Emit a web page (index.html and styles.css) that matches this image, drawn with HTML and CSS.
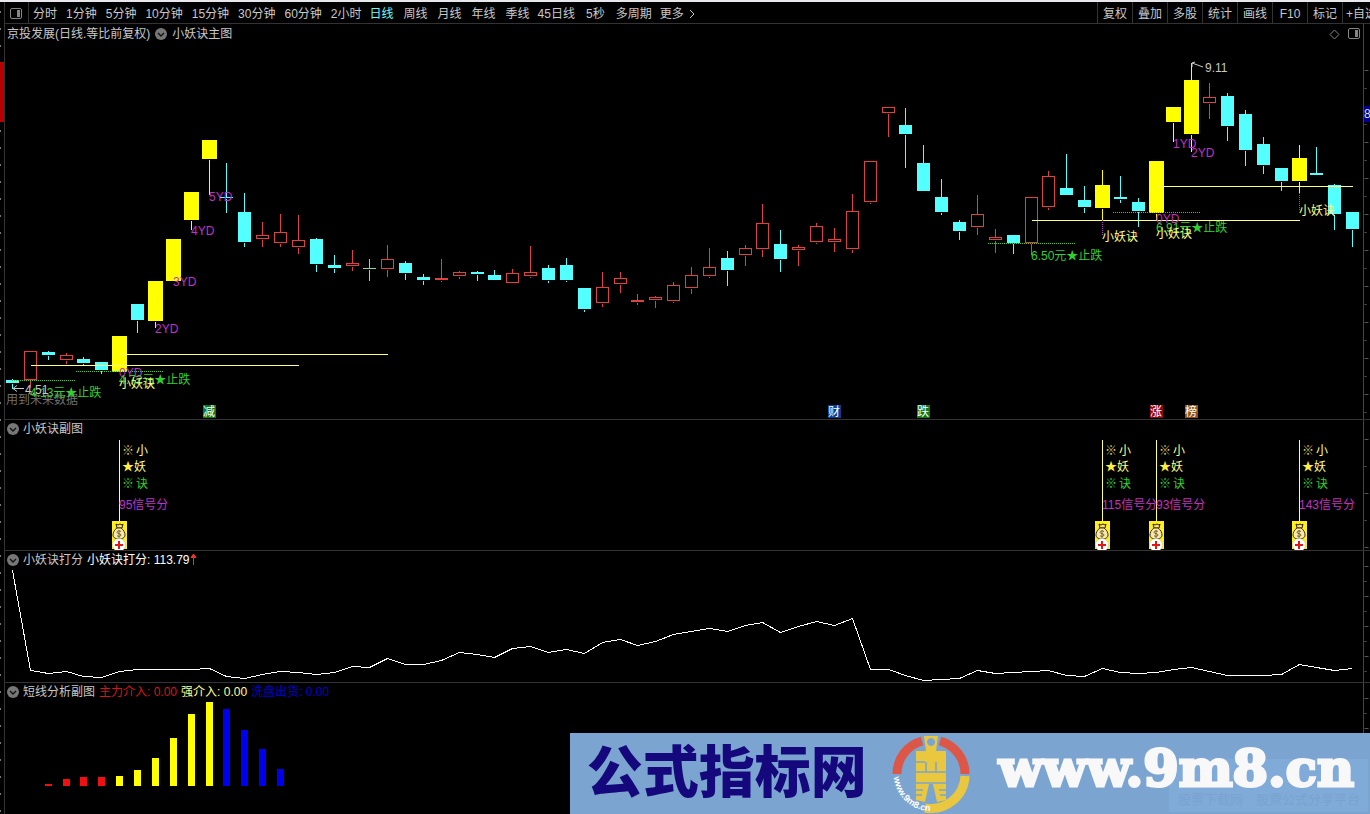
FILE: index.html
```
<!DOCTYPE html>
<html lang="zh-CN">
<head>
    <meta charset="utf-8">
    <title>京投发展 - 日线</title>
    <link rel="stylesheet" href="styles.css">
</head>
<body>
    <svg class="defs" aria-hidden="true">
        <symbol id="layout" viewBox="0 0 12 12">
            <rect x="0.5" y="0.5" width="11" height="10" rx="1.5" fill="none" stroke="#858585"/>
            <rect x="7" y="2" width="3" height="7" fill="#858585"/>
        </symbol>
        <symbol id="fold" viewBox="0 0 12 12">
            <circle cx="6" cy="6" r="6" fill="#777"/>
            <path d="M3 5l3 3 3-3" fill="none" stroke="#111" stroke-width="1.4"/>
        </symbol>
        <symbol id="bag" viewBox="0 0 15 29">
            <rect width="15" height="28" fill="#ffee20"/>
            <path d="M4 3l2 1 2-1 2 1 1-1-1 4H5z" fill="#f7e27c" stroke="#332200"/>
            <path d="M5 7C2 9 1 12 1 14c0 3 3 4 6 4s6-1 6-4c0-2-1-5-4-7z" fill="#f7e9a8" stroke="#443311"/>
            <path d="M9 10.500c-1-1-4-.8-4 .8 0 1.700 4 1 4 2.700 0 1.700-3 1.700-4 .7M7 9v8" fill="none" stroke="#76603a"/>
            <circle cx="7" cy="24" r="6.500" fill="#fff" stroke="#bb9" stroke-width=".5"/>
            <path d="M7 20v8M3 24h8" stroke="#e01818" stroke-width="2"/>
        </symbol>
    </svg>

    <div class="app">
        <aside class="edge"><div class="edge-mark"></div></aside>
        <div class="workspace">
            <header class="toolbar">
                <button class="layout-btn" aria-label="布局"><svg width="12" height="12"><use href="#layout"/></svg></button>
                <nav class="periods">
                    <div class="minutes">
                        <button>分时</button><button>1分钟</button><button>5分钟</button><button>10分钟</button><button>15分钟</button><button>30分钟</button><button>60分钟</button><button>2小时</button>
                    </div>
                    <div class="days">
                        <button class="active">日线</button><button>周线</button><button>月线</button><button>年线</button><button>季线</button>
                    </div>
                    <div class="custom">
                        <button>45日线</button><button>5秒</button><button>多周期</button>
                    </div>
                    <button class="more">更多<svg width="6" height="10"><path d="M1 1l4 4-4 4" fill="none" stroke="#c8c8c8"/></svg></button>
                </nav>
                <div class="tools">
                    <button>复权</button><button>叠加</button><button>多股</button><button>统计</button><button>画线</button><button>F10</button><button>标记</button><button class="fav">+自选</button>
                </div>
            </header>

            <section class="panel main">
                <div class="plot">
                    <div class="title">
                        <span>京投发展(日线.等比前复权)</span>
                        <svg width="12" height="12"><use href="#fold"/></svg>
                        <span>小妖诀主图</span>
                        <div class="corner">
                            <svg width="11" height="11"><path d="M5.500 1l4.500 4.500-4.500 4.500L1 5.500z" fill="none" stroke="#858585"/></svg>
                            <svg width="12" height="12"><use href="#layout"/></svg>
                        </div>
                    </div>
                    <svg class="chart" id="kline"></svg>
                </div>
                <div class="axis"><svg class="ticks" data-first="46" data-step="18"></svg><span class="price">8</span></div>
            </section>

            <section class="panel sub">
                <div class="plot">
                    <div class="title">
                        <svg width="12" height="12"><use href="#fold"/></svg>
                        <span>小妖诀副图</span>
                    </div>
                    <svg class="chart" id="signals"></svg>
                </div>
                <div class="axis"><svg class="ticks" data-first="19" data-step="27"></svg></div>
            </section>

            <section class="panel score">
                <div class="plot">
                    <div class="title">
                        <svg width="12" height="12"><use href="#fold"/></svg>
                        <span>小妖诀打分</span>
                        <span class="white">小妖诀打分: 113.79<svg class="up" width="7" height="12"><path d="M3.500 12V2M1 4.500L3.500 1 6 4.500z" fill="#e33" stroke="#e33"/></svg></span>
                    </div>
                    <svg class="chart" id="score"></svg>
                </div>
                <div class="axis"><svg class="ticks" data-first="15" data-step="15"></svg></div>
            </section>

            <section class="panel sub">
                <div class="plot">
                    <div class="title">
                        <svg width="12" height="12"><use href="#fold"/></svg>
                        <span>短线分析副图</span>
                        <span class="red">主力介入: 0.00</span>
                        <span class="yellow">强介入: 0.00</span>
                        <span class="blue">洗盘出货: 0.00</span>
                    </div>
                    <svg class="chart" id="bars"></svg>
                </div>
                <div class="axis"><svg class="ticks" data-first="15" data-step="15"></svg></div>
            </section>
        </div>
    </div>

    <div class="banner">
        <span class="site-name">公式指标网</span>
        <svg class="logo" width="80" height="80" viewBox="0 0 80 80">
            <path d="M6 40A34 34 0 0 1 31 7" fill="none" stroke="#dc5747" stroke-width="9"/>
            <path d="M49 7A34 34 0 0 1 74 40" fill="none" stroke="#dc5747" stroke-width="9"/>
            <path d="M74 42A34 34 0 0 1 34 74" fill="none" stroke="#e9c83f" stroke-width="9"/>
            <path fill="#e9c83f" fill-rule="evenodd" d="M33 2h14l-2 15h10v49l-9 2-4-18h-4l-4 18-9-2V17h10zM40 4a4 4 0 1 0 .1 0z"/>
            <path d="M25 28h9M25 38h30M25 49h30M35 28v10M45 28v10M25 56h7M48 56h7M25 61h6M49 61h6" stroke="#7ba5d0" stroke-width="1.500"/>
            <path id="arc" d="M3 43A37 37 0 0 0 40 77" fill="none"/>
            <text class="logo-text"><textPath href="#arc">www.9m8.cn</textPath></text>
        </svg>
        <span class="site-url">www.9m8.cn</span>
        <div class="ghost">股票下载网　股票公式分享平台</div>
    </div>

    <script src="chart.js"></script>
</body>
</html>
```
FILE: styles.css
```
* {
    box-sizing: border-box;
}

body {
    margin: 0;
    background: #000;
    color: #c8c8c8;
    font-family: "Liberation Sans", "Noto Sans CJK SC", sans-serif;
    font-size: 12px;
    line-height: 16px;
    overflow: hidden;
}

button {
    padding: 0;
    border: 0;
    background: none;
    color: inherit;
    font: inherit;
    white-space: nowrap;
    cursor: pointer;
}

svg {
    display: block;
    flex: none;
}

.defs {
    position: absolute;
    width: 0;
    height: 0;
}

.app {
    display: flex;
    min-height: 100vh;
    border-top: 2px solid #e8e8ec;
}

/* sliver of the neighbouring window */
.edge {
    width: 5px;
    padding-top: 60px;
    border-right: 1px solid #333;
    background: repeating-linear-gradient(#000 0 9px, #777 9px 11px, #000 11px 17px) left / 1px 100% no-repeat;
}

.edge-mark {
    height: 60px;
    background: #b80000;
}

.workspace {
    flex: 1;
    min-width: 0;
    display: flex;
    flex-direction: column;
}

/* toolbar */
.toolbar {
    display: flex;
    align-items: stretch;
    height: 22px;
    border-bottom: 1px solid #333;
    overflow: hidden;
}

.toolbar button {
    padding-top: 2px;
}

.toolbar .layout-btn {
    width: 24px;
    padding-left: 5px;
    border-right: 1px solid #333;
}

.periods {
    display: flex;
    gap: 8px;
    padding-left: 4px;
}

.minutes,
.days,
.custom {
    display: flex;
    gap: 9px;
}

.days {
    gap: 10px;
}

.custom {
    gap: 11px;
}

.periods .active {
    color: #6ff;
}

.more {
    display: flex;
    align-items: center;
    gap: 5px;
}

.tools {
    display: flex;
    margin-left: auto;
}

.tools button {
    width: 35px;
    border-left: 1px solid #333;
}

.tools .fav {
    width: 28px;
    padding-left: 3px;
    text-align: left;
    overflow: hidden;
}

/* panels */
.panel {
    display: flex;
    border-bottom: 1px solid #333;
}

.main {
    flex: 1;
}

.sub {
    height: 131px;
}

.score {
    height: 132px;
}

.panel:last-child {
    border-bottom: 0;
}

.plot {
    position: relative;
    flex: 1;
    min-width: 0;
}

.chart {
    position: absolute;
    inset: 0;
    width: 100%;
    height: 100%;
}

.title {
    display: flex;
    align-items: center;
    gap: 4px;
    height: 18px;
    padding-left: 2px;
    white-space: nowrap;
}

.main .title {
    gap: 5px;
    height: 20px;
}

.corner {
    display: flex;
    align-items: center;
    gap: 8px;
    margin-left: auto;
    padding-right: 3px;
}

.white {
    display: flex;
    color: #fff;
}

.up {
    margin-top: 1px;
}

.red {
    color: #d01818;
}

.yellow {
    color: #ffff90;
}

.blue {
    color: #0000d0;
}

.axis {
    position: relative;
    width: 7px;
    border-left: 1px solid #444;
    overflow: hidden;
}

.ticks {
    width: 100%;
    height: 100%;
}

.price {
    position: absolute;
    top: 82px;
    left: 0;
    background: #000090;
    color: #ddd;
}

/* chart texts */
.chart text {
    font-size: 12px;
}

.chart line {
    shape-rendering: crispEdges;
}

.chart .badge {
    fill: #fff;
    text-anchor: middle;
}

/* site banner */
.banner {
    position: absolute;
    right: 0;
    bottom: 0;
    display: flex;
    align-items: center;
    height: 81px;
    padding: 0 16px 0 17px;
    background: #7ba5d0;
    white-space: nowrap;
    overflow: hidden;
}

.site-name {
    padding-bottom: 12px;
    color: #15087c;
    font-family: "Noto Sans CJK SC", sans-serif;
    font-size: 56px;
    font-weight: 900;
    line-height: 68px;
}

.logo {
    margin-left: 24px;
}

.logo-text {
    fill: #fff;
    font-size: 9px;
    font-weight: bold;
}

.site-url {
    z-index: 1;
    margin-left: 28px;
    padding-bottom: 12px;
    color: #f8f8f8;
    font-family: "DejaVu Serif", serif;
    font-size: 51px;
    font-weight: bold;
    line-height: 68px;
    -webkit-text-stroke: 3px #f8f8f8;
}

.ghost {
    position: absolute;
    right: 2px;
    bottom: 2px;
    width: 199px;
    height: 53px;
    padding: 33px 0 0 9px;
    background: #80aad8;
    color: #79a3cf;
    font-size: 13px;
}
```
FILE: chart.js
```
const NS = 'http://www.w3.org/2000/svg';
const SLOTS = 76;

const YELLOW = '#ffff00';
const CYAN = '#54ffff';
const RED = '#e04040';
const PALE = '#ffff80';
const MAGENTA = '#c030c8';
const GREEN = '#30d030';

// type, high, body top, body bottom, low
const candles = [
    ['c', 354, 356, 359, 364], ['r', 327, 327, 356, 363], ['c', 326, 328, 331, 335], ['r', 328, 331, 336, 339],
    ['c', 332, 335, 339, 341], ['c', 338, 338, 346, 349], ['y', 312, 312, 348, 348], ['c', 280, 280, 296, 308],
    ['y', 257, 257, 297, 303], ['y', 215, 215, 257, 257], ['y', 168, 168, 196, 205], ['y', 116, 116, 135, 170],
    ['c', 138, 173, 174, 188], ['c', 168, 188, 218, 222], ['r', 197, 211, 215, 222], ['r', 189, 208, 219, 222],
    ['r', 190, 216, 223, 229], ['c', 213, 215, 240, 247], ['c', 230, 241, 244, 248], ['r', 225, 239, 242, 246],
    ['g', 234, 244, 245, 256], ['r', 220, 235, 245, 252], ['c', 236, 239, 249, 255], ['c', 249, 253, 256, 260],
    ['r', 234, 254, 256, 257], ['r', 246, 248, 252, 254], ['c', 246, 248, 250, 256], ['c', 245, 251, 256, 256],
    ['r', 244, 249, 259, 259], ['r', 221, 248, 252, 253], ['c', 240, 244, 256, 258], ['c', 233, 241, 256, 257],
    ['c', 263, 264, 285, 287], ['r', 247, 263, 279, 282], ['r', 247, 254, 260, 268], ['r', 269, 276, 278, 280],
    ['r', 271, 273, 276, 283], ['r', 257, 261, 277, 278], ['r', 242, 251, 264, 269], ['r', 223, 243, 252, 253],
    ['c', 226, 234, 246, 261], ['r', 220, 224, 231, 241], ['r', 179, 199, 225, 232], ['c', 205, 220, 235, 247],
    ['r', 220, 223, 226, 241], ['r', 198, 202, 218, 219], ['r', 203, 215, 218, 227], ['r', 169, 187, 225, 228],
    ['r', 137, 137, 178, 179], ['r', 83, 83, 89, 112], ['c', 83, 101, 110, 143], ['c', 120, 139, 167, 167],
    ['c', 154, 173, 188, 190], ['c', 195, 198, 207, 215], ['r', 170, 190, 203, 210], ['r', 204, 213, 216, 228],
    ['c', 210, 211, 219, 229], ['r', 173, 173, 219, 230], ['r', 146, 152, 183, 185], ['c', 129, 164, 171, 171],
    ['c', 161, 176, 183, 188], ['y', 145, 161, 184, 196], ['c', 151, 173, 175, 178], ['c', 173, 178, 187, 202],
    ['y', 137, 137, 189, 196], ['y', 83, 83, 98, 117], ['y', 38, 56, 110, 127], ['r', 58, 73, 79, 94],
    ['c', 68, 72, 102, 116], ['c', 85, 90, 126, 141], ['c', 112, 120, 141, 149], ['c', 143, 144, 157, 166],
    ['y', 120, 134, 157, 169], ['c', 122, 149, 151, 151], ['c', 159, 161, 190, 205], ['c', 188, 188, 205, 222]
];

// from slot, to slot, y
const levels = [[6, 21, 330], [1, 16, 341], [57, 72, 196], [64, 75, 162]];
const stops = [[0, 3.5, 356], [3.6, 8.5, 347], [54.6, 59.5, 219], [61.6, 66.5, 188]];

// slot, y of the text middle, text, colour
const labels = [
    [11, 173, '5YD', MAGENTA], [10, 207, '4YD', MAGENTA], [9, 258, '3YD', MAGENTA], [8, 305, '2YD', MAGENTA],
    [6, 349, '0YD', MAGENTA], [64, 195, '0YD', MAGENTA], [65, 120, '1YD', MAGENTA], [66, 129, '2YD', MAGENTA],
    [1, 369, '4.13元★止跌', GREEN], [6, 356, '4.72元★止跌', GREEN],
    [57, 232, '6.50元★止跌', GREEN], [64, 204, '6.91元★止跌', GREEN],
    [6, 360, '小妖诀', PALE], [61, 213, '小妖诀', PALE], [64, 210, '小妖诀', PALE], [72, 187, '小妖诀', PALE]
];

const badges = [[11, '减', '#107818'], [46, '财', '#0c3c90'], [51, '跌', '#107818'], [64, '涨', '#8c0808'], [66, '榜', '#905410']];

const signals = [[6, 95], [61, 115], [64, 93], [72, 143]];

const score = [
    19, 119, 122, 120, 125, 126, 120, 118, 118, 118, 118, 117, 125, 127, 123, 120, 121, 123, 121, 115,
    116, 107, 113, 113, 109, 101, 103, 106, 97, 95, 101, 98, 102, 91, 88, 94, 90, 83, 80, 77,
    80, 74, 71, 81, 75, 70, 74, 67, 118, 118, 124, 129, 128, 127, 119, 122, 121, 120, 119, 124,
    125, 117, 121, 122, 121, 118, 116, 120, 124, 124, 124, 123, 113, 116, 119, 117
];

// bar heights from slot 2 on
const bars = [2, 7, 9, 9, 10, 16, 28, 48, 72, 84, 77, 56, 37, 17];

function el(parent, name, attrs, text) {
    const node = document.createElementNS(NS, name);
    for (const key in attrs) node.setAttribute(key, attrs[key]);
    if (text) node.textContent = text;
    parent.appendChild(node);
    return node;
}

function line(svg, x1, y1, x2, y2, stroke) {
    el(svg, 'line', { x1: x1 + 0.5, y1: y1 + 0.5, x2: x2 + 0.5, y2: y2 + 0.5, stroke });
}

// dots start on whole pixels so they stay sharp
function dotsAcross(svg, x1, x2, y, stroke) {
    el(svg, 'line', { x1, y1: y + 0.5, x2, y2: y + 0.5, stroke, 'stroke-dasharray': '1 1' });
}

function dotsDown(svg, x, y1, y2, stroke) {
    el(svg, 'line', { x1: x + 0.5, y1, x2: x + 0.5, y2, stroke, 'stroke-dasharray': '1 1' });
}

function text(svg, x, y, value, fill) {
    return el(svg, 'text', { x, y: y + 4, fill }, value);
}

function open(id) {
    const svg = document.getElementById(id);
    svg.replaceChildren();
    const pitch = svg.clientWidth / SLOTS;
    return [svg, i => Math.round(7 + i * pitch)];
}

function drawKline() {
    const [svg, x] = open('kline');
    text(svg, 1, 376, '用到未来数据', '#707070');

    candles.forEach(([type, high, top, bottom, low], i) => {
        const cx = x(i);
        const color = { c: CYAN, r: RED, y: YELLOW, g: '#a0d0a0' }[type];
        const half = type === 'y' ? 7 : 6;
        if (high < top) line(svg, cx, high, cx, top, color);
        if (low > bottom) line(svg, cx, bottom, cx, low, color);
        if (type === 'r' && bottom - top > 2) {
            el(svg, 'rect', { x: cx - 5.5, y: top + 0.5, width: 12, height: bottom - top - 1, fill: '#000', stroke: color });
        } else {
            el(svg, 'rect', { x: cx - half, y: top, width: half * 2 + 1, height: bottom - top, fill: color });
        }
    });

    levels.forEach(([from, to, y]) => line(svg, x(from), y, x(to), y, PALE));
    stops.forEach(([from, to, y]) => dotsAcross(svg, x(from), x(to), y, GREEN));
    dotsDown(svg, x(61), 196, 212, MAGENTA);
    dotsDown(svg, x(72), 169, 187, MAGENTA);
    labels.forEach(([i, y, value, fill]) => text(svg, x(i), y, value, fill));

    // lowest and highest price
    el(svg, 'path', { d: `M${x(0) + 12} 364.500h-11m4 -3l-4 3l4 3`, fill: 'none', stroke: '#c8c8c8' });
    text(svg, x(0) + 13, 366, '4.51', '#c8c8c8');
    el(svg, 'path', { d: `M${x(66) + 12} 43l-11 -4m3 -1l-3 1v4`, fill: 'none', stroke: '#c8c8c8' });
    text(svg, x(66) + 14, 44, '9.11', '#c8c8c8');

    badges.forEach(([i, value, fill]) => {
        el(svg, 'rect', { x: x(i) - 6, y: 381, width: 13, height: 13, fill });
        text(svg, x(i), 388, value).setAttribute('class', 'badge');
    });
}

function drawSignals() {
    const [svg, x] = open('signals');
    signals.forEach(([i, value]) => {
        const cx = x(i);
        line(svg, cx, 19, cx, 101, PALE);
        text(svg, cx + 3, 31, '※', '#d8c860');
        text(svg, cx + 17, 31, '小', PALE);
        text(svg, cx + 3, 47, '★', '#ffee40');
        text(svg, cx + 15, 47, '妖', PALE);
        text(svg, cx + 3, 64, '※', GREEN);
        text(svg, cx + 17, 64, '诀', GREEN);
        text(svg, cx, 85, value + '信号分', MAGENTA);
        el(svg, 'use', { href: '#bag', x: cx - 7, y: 101, width: 15, height: 29 });
    });
}

function drawScore() {
    const [svg, x] = open('score');
    const points = score.map((y, i) => `${x(i) + 0.5},${y + 0.5}`).join(' ');
    el(svg, 'polyline', { points, fill: 'none', stroke: '#fff', 'shape-rendering': 'crispEdges' });
}

function drawBars() {
    const [svg, x] = open('bars');
    bars.forEach((height, n) => {
        const fill = n < 4 ? '#f01010' : n < 10 ? YELLOW : '#0000f0';
        el(svg, 'rect', { x: x(n + 2) - 3, y: 103 - height, width: 7, height, fill });
    });
}

function drawTicks() {
    document.querySelectorAll('.ticks').forEach(svg => {
        svg.replaceChildren();
        const step = Number(svg.dataset.step);
        let long = true;
        for (let y = Number(svg.dataset.first); y < svg.clientHeight; y += step) {
            line(svg, 0, y, long ? 4 : 2, y, '#555');
            long = !long;
        }
    });
}

function draw() {
    drawKline();
    drawSignals();
    drawScore();
    drawBars();
    drawTicks();
}

draw();
window.addEventListener('resize', draw);
```
